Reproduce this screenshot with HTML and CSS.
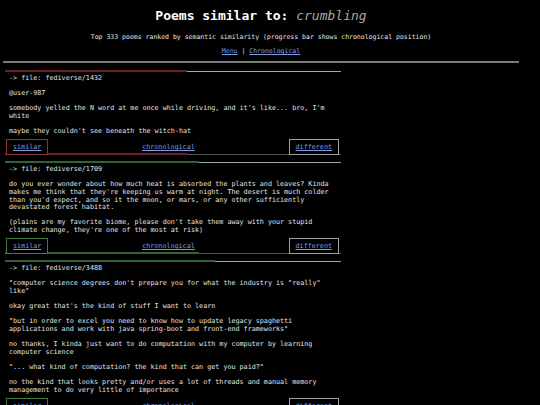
FILE: index.html
```html
<!DOCTYPE html>
<html>
<head>
<meta charset="utf-8">
<title>Poems similar to: crumbling</title>
<link rel="stylesheet" href="styles.css">
</head>
<body>
<div class="page">
  <header class="head">
    <h1 class="title">Poems similar to: <em class="query">crumbling</em></h1>
    <p class="sub">Top 333 poems ranked by semantic similarity (progress bar shows chronological position)</p>
    <p class="nav"><a href="#">Menu</a> | <a href="#">Chronological</a></p>
  </header>
  <hr class="rule">
  <main class="list">
    <section class="card red">
      <div class="bar top"><span class="fill" style="width:54.2%"></span><span class="rest"></span></div>
      <div class="file">-&gt; file: fediverse/1432</div>
      <pre class="poem">@user-987

somebody yelled the N word at me once while driving, and it's like... bro, I'm white

maybe they couldn't see beneath the witch-hat</pre>
      <div class="actions"><a class="btn sim" href="#">similar</a><a class="chrono" href="#">chronological</a><a class="btn diff" href="#">different</a></div>
      <div class="bar bottom"><span class="fill" style="width:54.2%"></span><span class="rest"></span></div>
    </section>
    <section class="card green">
      <div class="bar top"><span class="fill" style="width:57.7%"></span><span class="rest"></span></div>
      <div class="file">-&gt; file: fediverse/1709</div>
      <pre class="poem">
do you ever wonder about how much heat is absorbed the plants and leaves? Kinda makes me think that they're keeping us warm at night. The desert is much colder than you'd expect, and so it the moon, or mars, or any other sufficiently devastated forest habitat.

(plains are my favorite biome, please don't take them away with your stupid climate change, they're one of the most at risk)</pre>
      <div class="actions"><a class="btn sim" href="#">similar</a><a class="chrono" href="#">chronological</a><a class="btn diff" href="#">different</a></div>
      <div class="bar bottom"><span class="fill" style="width:57.7%"></span><span class="rest"></span></div>
    </section>
    <section class="card green">
      <div class="bar top"><span class="fill" style="width:62.5%"></span><span class="rest"></span></div>
      <div class="file">-&gt; file: fediverse/3488</div>
      <pre class="poem">"computer science degrees don't prepare you for what the industry is "really" like"

okay great that's the kind of stuff I want to learn

"but in order to excel you need to know how to update legacy spaghetti applications and work with java spring-boot and front-end frameworks"

no thanks, I kinda just want to do computation with my computer by learning computer science

"... what kind of computation? the kind that can get you paid?"

no the kind that looks pretty and/or uses a lot of threads and manual memory management to do very little of importance</pre>
      <div class="actions"><a class="btn sim" href="#">similar</a><a class="chrono" href="#">chronological</a><a class="btn diff" href="#">different</a></div>
      <div class="bar bottom"><span class="fill" style="width:62.5%"></span><span class="rest"></span></div>
    </section>
  </main>
</div>
</body>
</html>
```
FILE: styles.css
```css
html, body {
  margin: 0;
  padding: 0;
  background: #000;
}
body {
  font-family: "DejaVu Sans Mono", "Liberation Mono", monospace;
  color: #e0e0e0;
}
.page {
  width: 516px;
  margin-left: 3px;
}
.head {
  padding-top: 8px;
  text-align: center;
}
.title {
  margin: 0;
  font-size: 13px;
  line-height: 16px;
  font-weight: bold;
  color: #fff;
}
.query {
  font-weight: normal;
  font-style: italic;
  color: #a8a8a8;
}
.sub {
  margin: 9px 0 0;
  font-size: 6.5px;
  line-height: 8px;
  color: #e6e6e6;
}
.nav {
  margin: 6px 0 0;
  font-size: 6.5px;
  line-height: 8px;
  color: #ddd;
}
a {
  color: #7b9be2;
  text-decoration: underline;
}
.rule {
  margin: 6px 0 0;
  border: 0;
  height: 2px;
  background: #7a7a7a;
}
.list {
  margin-top: 7px;
  padding-left: 2px;
}
.card {
  width: 336px;
  margin-bottom: 6px;
}
.bar {
  display: flex;
  align-items: flex-end;
  height: 2px;
}
.fill {
  height: 2px;
}
.rest {
  flex: 1;
  height: 1px;
}
.bar.top .rest {
  background: #a6a6a6;
}
.bar.bottom {
  margin-top: -2px;
}
.bar.bottom .rest {
  background: #555;
}
.red .fill {
  background: #6a2222;
}
.green .fill {
  background: #2f6234;
}
.file, .poem {
  font-size: 6.72px;
  line-height: 7.6px;
  color: #e4e4e4;
  padding-left: 4px;
}
.file {
  margin-top: 3px;
}
.poem {
  margin: 7.6px 0 0;
  font-family: "DejaVu Sans Mono", "Liberation Mono", monospace;
  white-space: pre-wrap;
  width: 80ch;
}
.actions {
  display: flex;
  justify-content: space-between;
  align-items: center;
  margin-top: 3.5px;
  padding: 0 2px 0 1px;
  font-size: 6.72px;
  line-height: 8px;
}
.btn {
  position: relative;
  z-index: 1;
  display: block;
  padding: 3px 6px;
  border: 1px solid #999;
  background: #000;
}
.red .sim {
  border-color: #8e3535;
}
.green .sim {
  border-color: #3f7a45;
}
.diff {
  border-color: #a0a0a0;
}
```
